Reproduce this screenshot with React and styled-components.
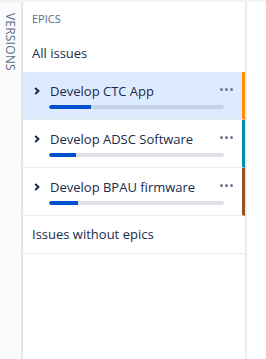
import styled, { createGlobalStyle } from "styled-components";

const GlobalStyle = createGlobalStyle`
  body {
    margin: 0;
    font-family: "Open Sans", "Liberation Sans", sans-serif;
    color: #172b4d;
    background: #ffffff;
  }
`

const Page = styled.div`
  display: flex;
  height: 359px;
  border-top: 2px solid #f1f2f4;
  box-sizing: border-box;
`

const SideTab = styled.div`
  width: 21px;
  flex: none;
  background: #fafbfc;
  border-right: 2px solid #e4e6ea;
  padding-top: 11px;
  display: flex;
  justify-content: center;
`

const SideLabel = styled.div`
  writing-mode: vertical-rl;
  font-size: 12px;
  letter-spacing: 0.2px;
  color: #5e6c84;
  line-height: 13px;
`

const Panel = styled.div`
  width: 222px;
  flex: none;
  border-right: 2px solid #ebecf0;
  display: flex;
  flex-direction: column;
`

const Heading = styled.div`
  font-size: 11px;
  line-height: 13px;
  color: #5e6c84;
  padding: 10px 0 0 9px;
  height: 20px;
`

const AllIssues = styled.div`
  font-size: 13px;
  line-height: 18px;
  padding: 12px 0 10px 9px;
`

const EpicRow = styled.div`
  height: 48px;
  box-sizing: border-box;
  border-bottom: 1px solid #ebecf0;
  border-right: 3px solid ${p => p.$color};
  background: ${p => (p.$active ? "#deebff" : "#ffffff")};
  padding-top: 10px;
`

const TopLine = styled.div`
  display: flex;
  align-items: center;
  height: 18px;
`

const Chevron = styled.svg`
  width: 6px;
  height: 8px;
  margin-left: 11px;
  margin-right: 10px;
  flex: none;
`

const Title = styled.div`
  flex: 1;
  font-size: 13px;
  line-height: 18px;
  white-space: nowrap;
`

const Dots = styled.div`
  display: flex;
  gap: 2px;
  margin-right: 9px;
  margin-top: -4px;

  span {
    width: 3px;
    height: 3px;
    border-radius: 50%;
    background: #6b778c;
  }
`

const Track = styled.div`
  margin: 5px 0 0 26px;
  width: 175px;
  height: 4px;
  border-radius: 2px;
  background: ${p => (p.$active ? "#c5d2e6" : "#dfe1e6")};
  overflow: hidden;
`

const Fill = styled.div`
  height: 100%;
  background: #0052cc;
  border-radius: 2px 0 0 2px;
`

const PlainRow = styled.div`
  font-size: 13px;
  line-height: 18px;
  padding: 9px 0 10px 9px;
  border-bottom: 1px solid #ebecf0;
`

const epics = [
  { name: "Develop CTC App", color: "#ff8b00", done: 42, active: true },
  { name: "Develop ADSC Software", color: "#008da6", done: 27 },
  { name: "Develop BPAU firmware", color: "#974f24", done: 29 },
]

function Epic({ epic }) {
  return (
    <EpicRow $color={epic.color} $active={epic.active}>
      <TopLine>
        <Chevron viewBox="0 0 6 8">
          <path d="M1.2 1 L4.4 4 L1.2 7" fill="none" stroke="#172b4d" strokeWidth="2" />
        </Chevron>
        <Title>{epic.name}</Title>
        <Dots><span /><span /><span /></Dots>
      </TopLine>
      <Track $active={epic.active}>
        <Fill style={{ width: epic.done }} />
      </Track>
    </EpicRow>
  )
}

export default function App() {
  return (
    <>
      <GlobalStyle />
      <Page>
        <SideTab>
          <SideLabel>VERSIONS</SideLabel>
        </SideTab>
        <Panel>
          <Heading>EPICS</Heading>
          <AllIssues>All issues</AllIssues>
          {epics.map(e => <Epic key={e.name} epic={e} />)}
          <PlainRow>Issues without epics</PlainRow>
        </Panel>
      </Page>
    </>
  )
}
